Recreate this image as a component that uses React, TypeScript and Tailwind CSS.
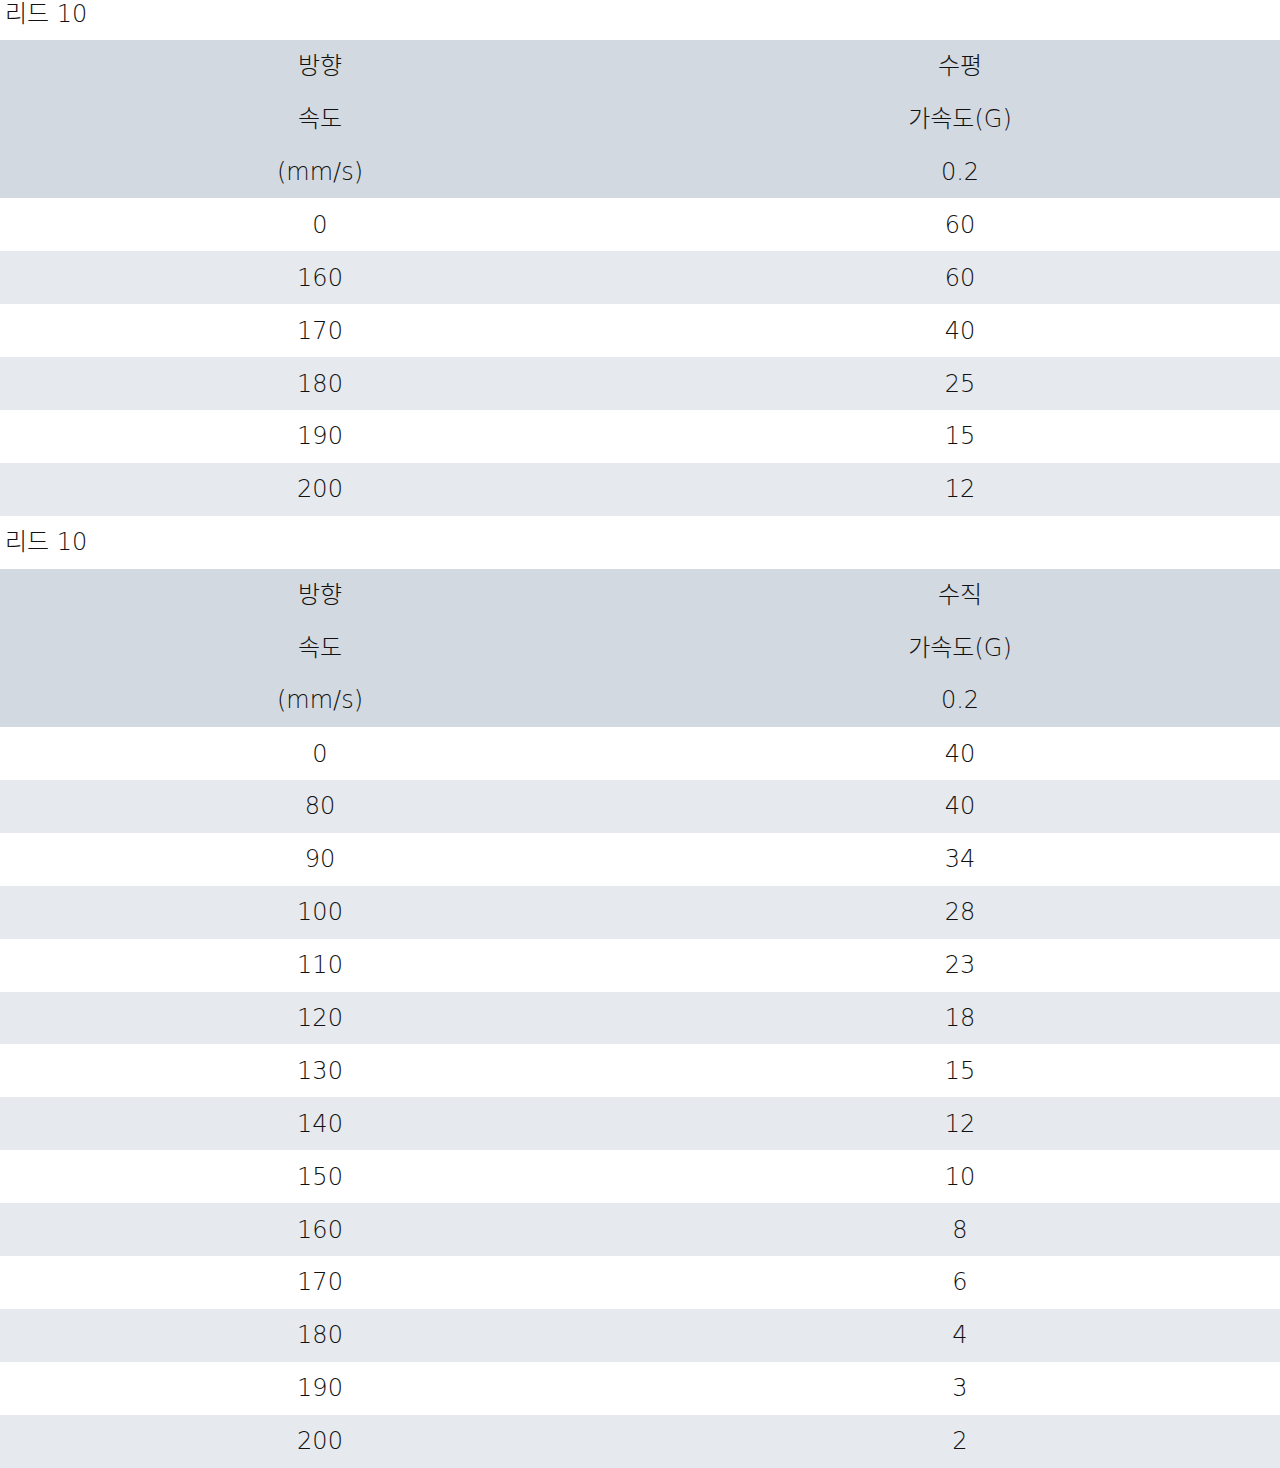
const FONT = "font-['DejaVu_Sans','Noto_Sans_CJK_KR',sans-serif]"

interface SpeedTable {
  caption: string
  direction: string
  rows: [string, string][]
}

const tables: SpeedTable[] = [
  {
    caption: "리드 10",
    direction: "수평",
    rows: [
      ["0", "60"],
      ["160", "60"],
      ["170", "40"],
      ["180", "25"],
      ["190", "15"],
      ["200", "12"],
    ],
  },
  {
    caption: "리드 10",
    direction: "수직",
    rows: [
      ["0", "40"],
      ["80", "40"],
      ["90", "34"],
      ["100", "28"],
      ["110", "23"],
      ["120", "18"],
      ["130", "15"],
      ["140", "12"],
      ["150", "10"],
      ["160", "8"],
      ["170", "6"],
      ["180", "4"],
      ["190", "3"],
      ["200", "2"],
    ],
  },
]

function TableBlock({ table, first }: { table: SpeedTable; first: boolean }) {
  return (
    <div>
      <div className={`h-[53px] flex items-center pl-[5px] text-[24px] ${first ? "-mt-[13px]" : ""}`}>
        {table.caption}
      </div>
      <div className="grid grid-cols-2 bg-[#d3d9e0] text-center text-[24px] leading-[52.8px]">
        <div>
          <div>방향</div>
          <div>속도</div>
          <div>(mm/s)</div>
        </div>
        <div>
          <div>{table.direction}</div>
          <div>가속도(G)</div>
          <div>0.2</div>
        </div>
      </div>
      {table.rows.map(([speed, value], i) => (
        <div
          key={i}
          className={`grid grid-cols-2 h-[52.9px] items-center text-center text-[24px] ${
            i % 2 === 1 ? "bg-[#e6e9ed]" : "bg-white"
          }`}
        >
          <div>{speed}</div>
          <div>{value}</div>
        </div>
      ))}
    </div>
  )
}

export default function App() {
  return (
    <div className={`${FONT} font-extralight w-[1280px] text-[#111] overflow-hidden bg-white`}>
      {tables.map((t, i) => (
        <TableBlock key={i} table={t} first={i === 0} />
      ))}
    </div>
  )
}
